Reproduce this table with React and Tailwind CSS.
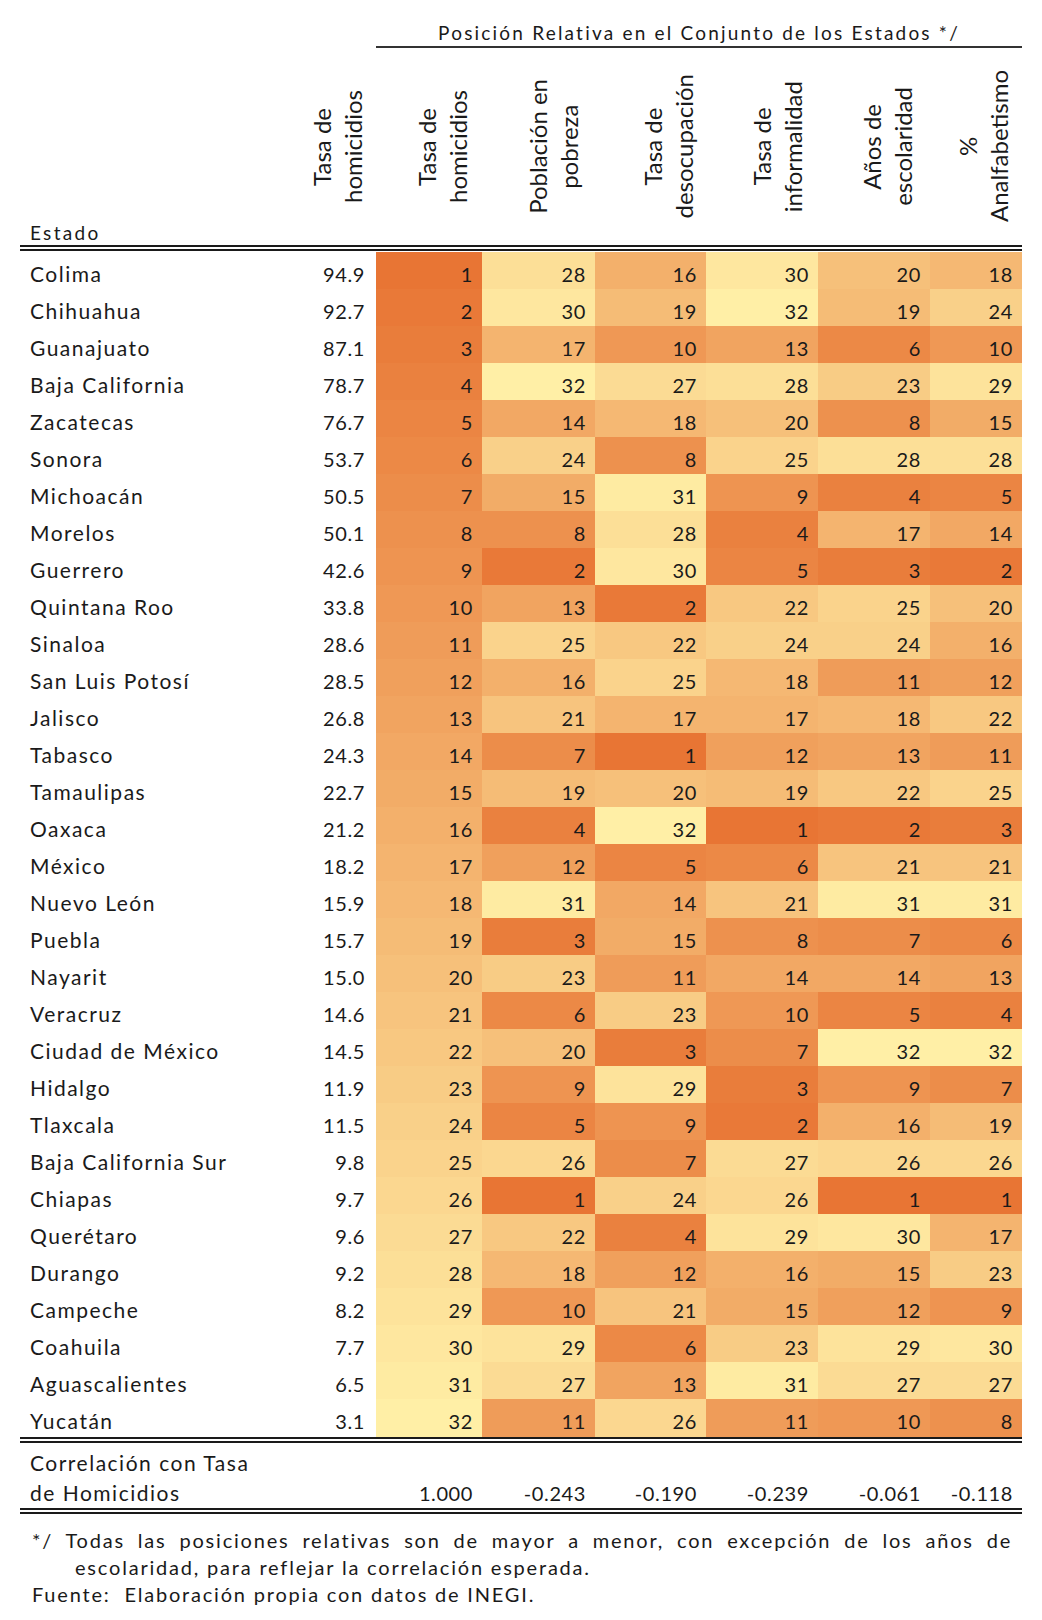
const rows = [
    ["Colima", "94.9", [28, 16, 30, 20, 18]],
    ["Chihuahua", "92.7", [30, 19, 32, 19, 24]],
    ["Guanajuato", "87.1", [17, 10, 13, 6, 10]],
    ["Baja California", "78.7", [32, 27, 28, 23, 29]],
    ["Zacatecas", "76.7", [14, 18, 20, 8, 15]],
    ["Sonora", "53.7", [24, 8, 25, 28, 28]],
    ["Michoacán", "50.5", [15, 31, 9, 4, 5]],
    ["Morelos", "50.1", [8, 28, 4, 17, 14]],
    ["Guerrero", "42.6", [2, 30, 5, 3, 2]],
    ["Quintana Roo", "33.8", [13, 2, 22, 25, 20]],
    ["Sinaloa", "28.6", [25, 22, 24, 24, 16]],
    ["San Luis Potosí", "28.5", [16, 25, 18, 11, 12]],
    ["Jalisco", "26.8", [21, 17, 17, 18, 22]],
    ["Tabasco", "24.3", [7, 1, 12, 13, 11]],
    ["Tamaulipas", "22.7", [19, 20, 19, 22, 25]],
    ["Oaxaca", "21.2", [4, 32, 1, 2, 3]],
    ["México", "18.2", [12, 5, 6, 21, 21]],
    ["Nuevo León", "15.9", [31, 14, 21, 31, 31]],
    ["Puebla", "15.7", [3, 15, 8, 7, 6]],
    ["Nayarit", "15.0", [23, 11, 14, 14, 13]],
    ["Veracruz", "14.6", [6, 23, 10, 5, 4]],
    ["Ciudad de México", "14.5", [20, 3, 7, 32, 32]],
    ["Hidalgo", "11.9", [9, 29, 3, 9, 7]],
    ["Tlaxcala", "11.5", [5, 9, 2, 16, 19]],
    ["Baja California Sur", "9.8", [26, 7, 27, 26, 26]],
    ["Chiapas", "9.7", [1, 24, 26, 1, 1]],
    ["Querétaro", "9.6", [22, 4, 29, 30, 17]],
    ["Durango", "9.2", [18, 12, 16, 15, 23]],
    ["Campeche", "8.2", [10, 21, 15, 12, 9]],
    ["Coahuila", "7.7", [29, 6, 23, 29, 30]],
    ["Aguascalientes", "6.5", [27, 13, 31, 27, 27]],
    ["Yucatán", "3.1", [11, 26, 11, 10, 8]],
];

const headers = [
    { lines: ["Tasa de", "homicidios"], pad: "pl-[2px]" },
    { lines: ["Tasa de", "homicidios"], pad: "pl-[26px]" },
    { lines: ["Población en", "pobreza"], pad: "pl-[29px]" },
    { lines: ["Tasa de", "desocupación"], pad: "pl-[35px]" },
    { lines: ["Tasa de", "informalidad"], pad: "pl-[30px]" },
    { lines: ["Años de", "escolaridad"], pad: "pl-[26px]" },
    { lines: ["%", "Analfabetismo"], pad: "pl-[14px]" },
];

const correlations = ["1.000", "-0.243", "-0.190", "-0.239", "-0.061", "-0.118"];

// rank 1 = orange, rank 32 = light yellow
const heat = (rank) => {
    const lo = [232, 117, 52];
    const hi = [255, 239, 166];
    const t = (rank - 1) / 31;
    const c = lo.map((v, i) => Math.round(v + (hi[i] - v) * t));
    return `rgb(${c[0]}, ${c[1]}, ${c[2]})`;
};

const cols = "grid grid-cols-[276px_80px_106px_113px_111px_112px_112px_92px]";

const DoubleRule = () => (
    <div className="flex flex-col">
        <div className="h-[2px] bg-[#1a1a1a]"></div>
        <div className="h-[2px]"></div>
        <div className="h-[2px] bg-[#1a1a1a]"></div>
    </div>
);

export default function App() {
    return (
        <div className="w-[1042px] min-h-[1620px] bg-white px-[20px] pt-[20px] text-[#1a1a1a] font-['Lato',sans-serif]">
            {/* titulo del grupo */}
            <div className="ml-[356px]">
                <div className="h-[26px] leading-[26px] text-center text-[19px] tracking-[2.2px]">
                    Posición Relativa en el Conjunto de los Estados */
                </div>
                <div className="h-[2px] bg-[#333]"></div>
            </div>

            {/* encabezados */}
            <div className={`${cols} h-[197px]`}>
                <div className="self-end pb-[2px] pl-[10px] text-[19px] leading-[20px] tracking-[2.3px]">Estado</div>
                {headers.map((h, i) => (
                    <div key={i} className={`flex items-center justify-center ${h.pad}`}>
                        <div className="[writing-mode:vertical-rl] rotate-180 text-center text-[24px] leading-[31px]">
                            {h.lines[0]}
                            <br />
                            {h.lines[1]}
                        </div>
                    </div>
                ))}
            </div>

            <DoubleRule />

            {/* filas */}
            <div className="mt-[1px] text-[20px]">
                {rows.map(([name, tasa, ranks], idx) => (
                    <div key={name} className={`${cols} h-[37px]`}>
                        <div className="flex items-center pt-[6px] pl-[10px] text-[21px] tracking-[1.5px]">{name}</div>
                        <div className="flex items-center justify-end pt-[6px] pr-[11px] tracking-[0.6px]">{tasa}</div>
                        {[idx + 1, ...ranks].map((r, j) => (
                            <div
                                key={j}
                                className="flex items-center justify-end pt-[6px] pr-[9px] tracking-[0.6px]"
                                style={{ backgroundColor: heat(r) }}
                            >
                                {r}
                            </div>
                        ))}
                    </div>
                ))}
            </div>

            <div className="mt-[1px]">
                <DoubleRule />
            </div>

            {/* correlacion */}
            <div className={`${cols} pt-[5px] text-[20px] leading-[30px]`}>
                <div className="col-span-2 pl-[10px] text-[21px] tracking-[1.5px]">
                    Correlación con Tasa
                    <br />
                    de Homicidios
                </div>
                {correlations.map((c) => (
                    <div key={c} className="self-end text-right pr-[9px] tracking-[0.6px]">{c}</div>
                ))}
            </div>

            <DoubleRule />

            {/* notas */}
            <div className="pt-[13px] pl-[12px] pr-[10px] text-[20px] leading-[27px] tracking-[1.8px]">
                <p className="text-justify pl-[43px] [text-indent:-43px]">
                    */ Todas las posiciones relativas son de mayor a menor, con excepción de los años de escolaridad, para reflejar la correlación esperada.
                </p>
                <p>Fuente:&nbsp; Elaboración propia con datos de INEGI.</p>
            </div>
        </div>
    );
}
